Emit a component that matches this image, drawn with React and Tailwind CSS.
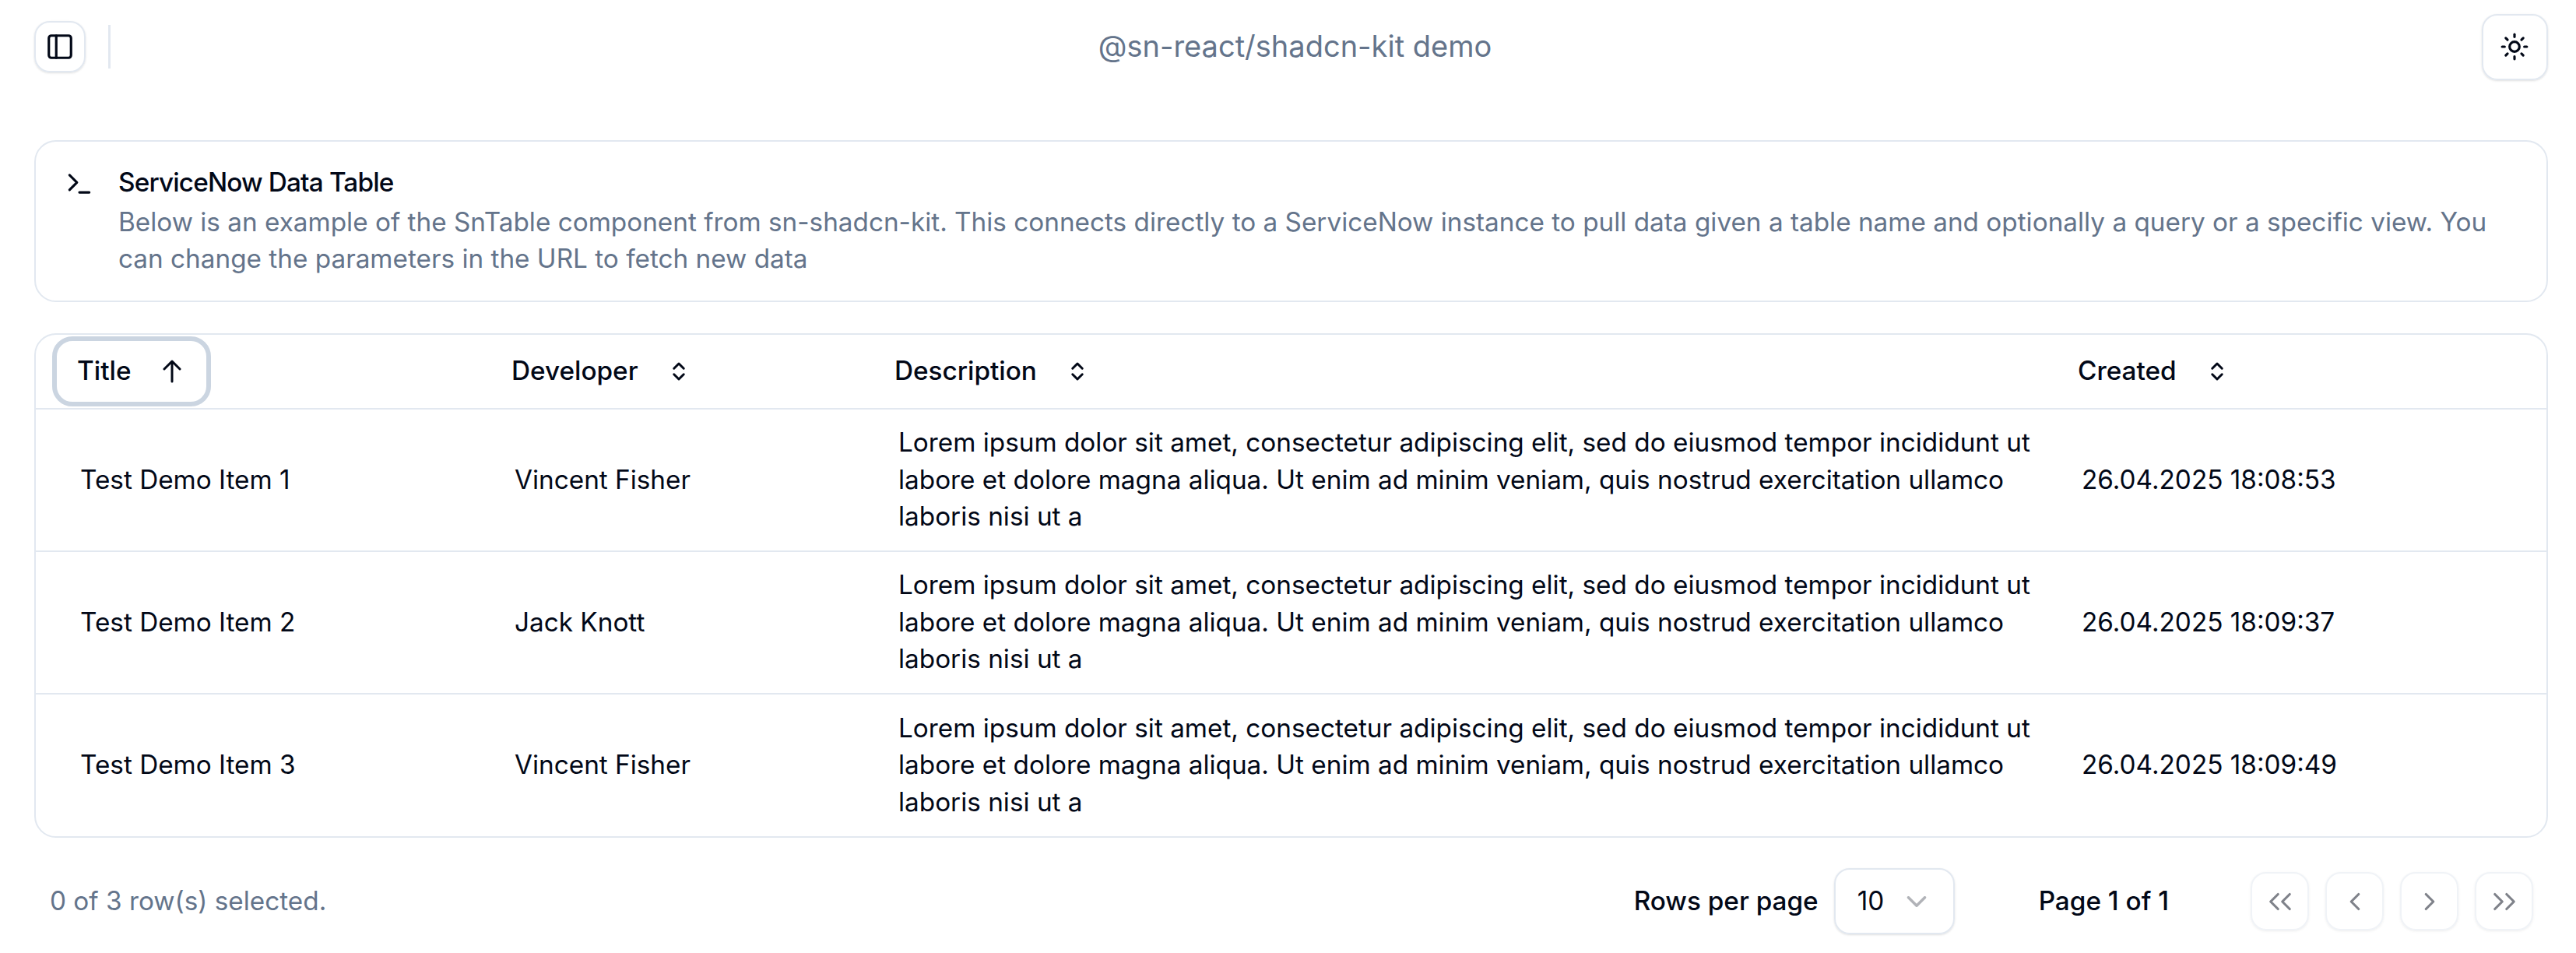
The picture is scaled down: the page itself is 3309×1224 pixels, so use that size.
import { ChevronDown, ChevronLeft, ChevronRight, ChevronsUpDown, PanelLeft, Sun, TerminalIcon } from 'lucide-react';

const lorem =
  'Lorem ipsum dolor sit amet, consectetur adipiscing elit, sed do eiusmod tempor incididunt ut labore et dolore magna aliqua. Ut enim ad minim veniam, quis nostrud exercitation ullamco laboris nisi ut a';

const rows = [
  { title: 'Test Demo Item 1', developer: 'Vincent Fisher', created: '26.04.2025 18:08:53' },
  { title: 'Test Demo Item 2', developer: 'Jack Knott', created: '26.04.2025 18:09:37' },
  { title: 'Test Demo Item 3', developer: 'Vincent Fisher', created: '26.04.2025 18:09:49' }
];

// lucide's double chevrons are too short here, so these are two single chevrons side by side
const DoubleChevron = ({ d }) => (
  <svg viewBox="0 0 24 24" className="w-[38px] h-[38px]" fill="none" stroke="currentColor" strokeWidth="2" strokeLinecap="round" strokeLinejoin="round">
    <path d={d} />
  </svg>
);

const SortHeader = ({ label, width }) => (
  <th className={`${width} h-[95px] p-0 text-left font-medium align-middle`}>
    <div className="flex items-center gap-[37px] pl-[6px]">
      <span>{label}</span>
      <ChevronsUpDown className="w-[30px] h-[30px]" strokeWidth={2.4} />
    </div>
  </th>
);

const PagerButton = ({ children }) => (
  <button className="w-[75px] h-[75px] flex items-center justify-center rounded-[20px] border-2 border-[#e2e8f0] shadow-sm opacity-50">
    {children}
  </button>
);

const App = () => {
  return (
    <div className="min-h-[1224px] bg-white text-[#020817] text-[33.3px] leading-[47.6px] font-['Inter',sans-serif]">
      <header className="h-[120px] flex items-center justify-between pl-[44px] pr-[36px]">
        <div className="flex items-center gap-[29px] w-[410px]">
          <button className="w-[66px] h-[66px] flex items-center justify-center rounded-[20px] border-2 border-[#e2e8f0] shadow-sm">
            <PanelLeft className="w-[38px] h-[38px]" strokeWidth={2} />
          </button>
          <div className="w-[3px] h-[56px] bg-[#e2e8f0]" />
        </div>
        <div className="text-[38px] text-[#64748b]">@sn-react/shadcn-kit demo</div>
        <div className="w-[400px] flex justify-end">
          <button className="w-[85px] h-[85px] flex items-center justify-center rounded-[20px] border-2 border-[#e2e8f0] shadow-sm">
            <Sun className="w-[38px] h-[38px]" strokeWidth={2} />
          </button>
        </div>
      </header>

      <main className="pl-[44px] pr-[36px] pt-[60px]">
        <section className="h-[208px] flex gap-[31px] rounded-[28px] border-2 border-[#e2e8f0] pl-[37px] pr-[40px] pt-[29px]">
          <TerminalIcon className="w-[38px] h-[38px] mt-[6px] shrink-0" strokeWidth={2} />
          <div>
            <h2 className="font-medium tracking-tight mb-[3px]">ServiceNow Data Table</h2>
            <p className="text-[#64748b]">
              Below is an example of the SnTable component from sn-shadcn-kit. This connects directly to a ServiceNow
              instance to pull data given a table name and optionally a query or a specific view. You can change the
              parameters in the URL to fetch new data
            </p>
          </div>
        </section>

        <section className="mt-[40px] rounded-[28px] border-2 border-[#e2e8f0] overflow-hidden">
          <table className="w-full table-fixed border-collapse">
            <thead>
              <tr className="border-b-2 border-[#e2e8f0]">
                <th className="w-[605px] h-[95px] p-0 pl-[21px] text-left font-medium">
                  <div className="w-[204px] h-[90px] flex items-center gap-[41px] pl-[26px] rounded-[26px] border-[6px] border-[#cbd5e1]">
                    <span>Title</span>
                    <svg viewBox="0 0 24 30" className="w-[24px] h-[30px]" fill="none" stroke="currentColor" strokeWidth="3" strokeLinecap="round" strokeLinejoin="round">
                      <path d="M12 28V2M2 12 12 2l10 10" />
                    </svg>
                  </div>
                </th>
                <SortHeader label="Developer" width="w-[492px]" />
                <SortHeader label="Description" width="w-[1520px]" />
                <SortHeader label="Created" width="w-auto" />
              </tr>
            </thead>
            <tbody>
              {rows.map((row) => (
                <tr key={row.title} className="h-[183px] border-b-2 last:border-b-0 border-[#e2e8f0]">
                  <td className="pl-[57px]">{row.title}</td>
                  <td className="pl-[10px]">{row.developer}</td>
                  <td className="pl-[11px] pr-[20px]">{lorem}</td>
                  <td className="pl-[11px]">{row.created}</td>
                </tr>
              ))}
            </tbody>
          </table>
        </section>

        <footer className="mt-[39px] h-[85px] flex items-center justify-between pl-[20px] pr-[19px]">
          <div className="text-[#64748b]">0 of 3 row(s) selected.</div>
          <div className="flex items-center">
            <span className="font-medium">Rows per page</span>
            <button className="ml-[20px] w-[155px] h-[85px] flex items-center justify-between pl-[28px] pr-[26px] rounded-[20px] border-2 border-[#e2e8f0] shadow-sm">
              <span>10</span>
              <ChevronDown className="w-[42px] h-[42px] opacity-30" strokeWidth={2} />
            </button>
            <span className="ml-[108px] font-medium">Page 1 of 1</span>
            <div className="ml-[105px] flex gap-[21px]">
              <PagerButton>
                <DoubleChevron d="M10.25 18l-6-6 6-6M19.75 18l-6-6 6-6" />
              </PagerButton>
              <PagerButton>
                <ChevronLeft className="w-[38px] h-[38px]" strokeWidth={2} />
              </PagerButton>
              <PagerButton>
                <ChevronRight className="w-[38px] h-[38px]" strokeWidth={2} />
              </PagerButton>
              <PagerButton>
                <DoubleChevron d="M4.25 6l6 6-6 6M13.75 6l6 6-6 6" />
              </PagerButton>
            </div>
          </div>
        </footer>
      </main>
    </div>
  );
};

export default App;
